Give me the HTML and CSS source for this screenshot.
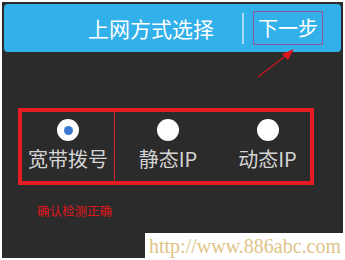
FILE: index.html
```html
<!DOCTYPE html>
<html lang="zh-CN">
<head>
    <meta charset="UTF-8">
    <meta name="viewport" content="width=device-width, initial-scale=1.0">
    <title>上网方式选择</title>
    <link rel="stylesheet" href="styles.css">
</head>
<body>
    <div class="frame">
        <div class="header">
            <div class="title">上网方式选择</div>
            <div class="divider"></div>
            <div class="next">下一步</div>
        </div>

        <svg class="arrow" width="60" height="40" viewBox="0 0 60 40">
            <line x1="6" y1="33" x2="36" y2="10" stroke="#c8141c" stroke-width="1.3"/>
            <polygon points="42,5 30,10 36,16" fill="#e0141c"/>
        </svg>

        <div class="options">
            <div class="option first">
                <span class="radio checked"></span>
                <span class="label">宽带拨号</span>
            </div>
            <div class="option second">
                <span class="radio"></span>
                <span class="label">静态IP</span>
            </div>
            <div class="option third">
                <span class="radio"></span>
                <span class="label">动态IP</span>
            </div>
        </div>

        <div class="note">确认检测正确</div>

        <div class="watermark">http://www.886abc.com</div>
    </div>
</body>
</html>
```

FILE: styles.css
```css
body {
    margin: 0;
    background-color: #ffffff;
    font-family: "Noto Sans CJK SC", "Noto Sans", sans-serif;
}

.frame {
    position: relative;
    margin: 2px;
    height: 252px;
    padding: 2px;
    background-color: #2b2b2b;
}

.header {
    display: flex;
    align-items: center;
    height: 48px;
    background-color: #31b0ea;
    border-radius: 4px;
    color: #ffffff;
}

.title {
    margin-left: 84px;
    font-size: 21px;
    width: 154px;
}

.divider {
    width: 2px;
    height: 31px;
    background-color: #a9dcf4;
}

.next {
    margin-left: 9px;
    padding: 0 4px;
    height: 32px;
    line-height: 31px;
    font-size: 20px;
    border: 1px solid #8a5a9a;
}

.arrow {
    position: absolute;
    left: 250px;
    top: 42px;
}

.options {
    display: flex;
    margin: 56px 0 0 14px;
    width: 288px;
    height: 69px;
    border: 4px solid #e51c23;
}

.option {
    display: flex;
    flex-direction: column;
    align-items: center;
    padding-top: 7px;
}

.option.first {
    width: 92px;
    border-right: 1px solid #d0202a;
}

.option.second {
    width: 106px;
}

.option.third {
    flex: 1;
    padding-left: 4px;
}

.radio {
    display: flex;
    justify-content: center;
    align-items: center;
    width: 22px;
    height: 22px;
    border-radius: 50%;
    background-color: #ffffff;
}

.radio.checked::after {
    content: "";
    width: 9px;
    height: 9px;
    border-radius: 50%;
    background-color: #3a78d2;
}

.label {
    margin-top: 4px;
    font-size: 20px;
    line-height: 28px;
    color: #d4d4d4;
}

.note {
    margin: 16px 0 0 33px;
    font-size: 12.5px;
    color: #e0151c;
}

.watermark {
    position: absolute;
    right: -2px;
    bottom: -2px;
    width: 196px;
    height: 27px;
    padding-left: 4px;
    background-color: #ffffff;
    font-family: "Liberation Serif", serif;
    font-size: 20px;
    line-height: 27px;
    color: #e0c487;
}
```
